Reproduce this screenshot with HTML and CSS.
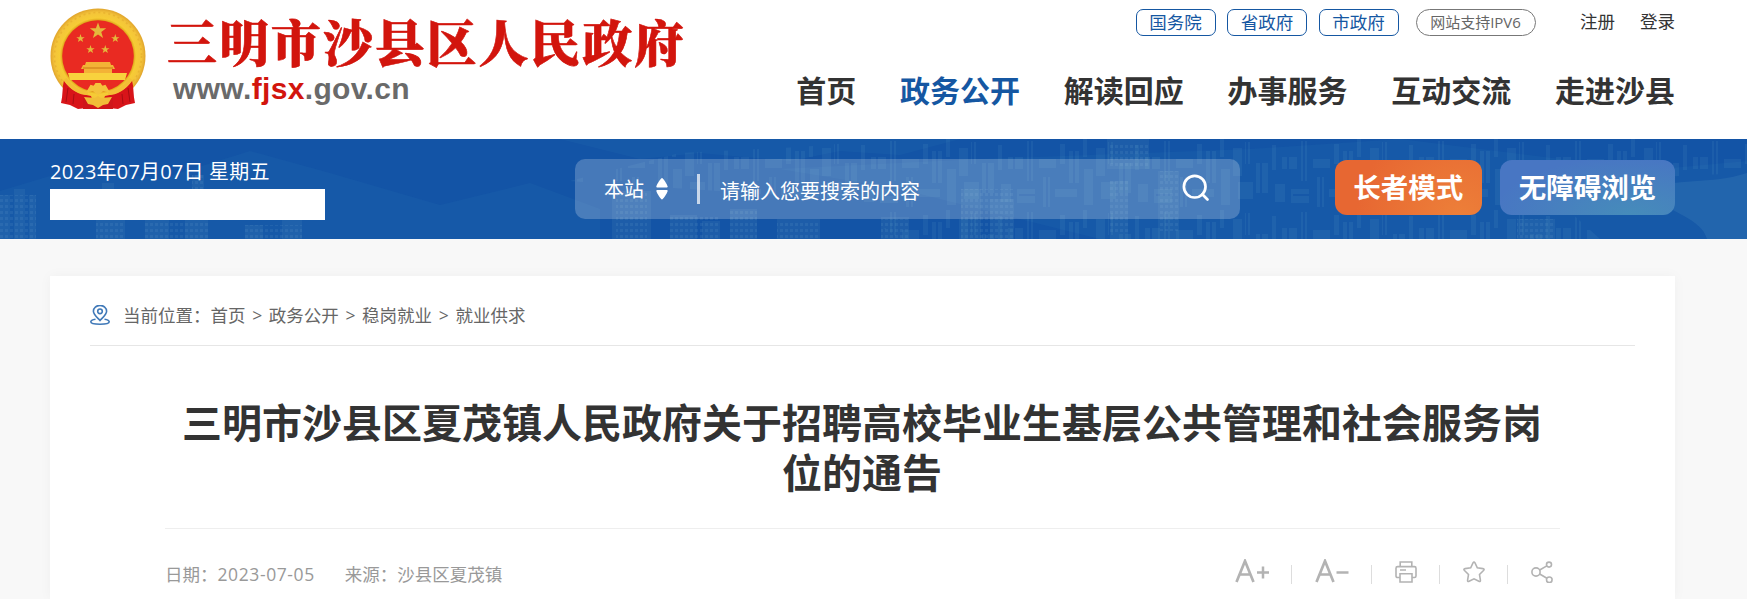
FILE: index.html
```html
<!DOCTYPE html>
<html lang="zh-CN">
	<head>
		<title>三明市沙县区人民政府</title>
		<meta charset="utf-8">
		<meta name="viewport" content="width=device-width, initial-scale=1">
		<link rel="stylesheet" href="styles.css">
	</head>
	<body>
		<header class="header wrap">
			<a class="logo">
				<svg class="emblem" viewBox="0 0 96 102">
					<defs>
						<radialGradient id="gold"><stop offset=".74" stop-color="#d99a13"/><stop offset=".8" stop-color="#f6cc35"/><stop offset=".92" stop-color="#f4c43a"/><stop offset="1" stop-color="#e0a42c"/></radialGradient>
						<path id="star" d="M0-10 2.4-3.1 9.5-3.1 3.8 1.2 5.9 8.1 0 4-5.9 8.1-3.8 1.2-9.5-3.1-2.4-3.1Z"/>
					</defs>
					<circle cx="48" cy="48" r="47.5" fill="url(#gold)"/>
					<circle cx="48" cy="48" r="43.5" fill="none" stroke="#dfa426" stroke-width="1.5" stroke-dasharray="2 3" opacity=".5"/>
					<circle cx="48" cy="48" r="35.8" fill="#e92a22"/>
					<g fill="#e4b83c">
						<use href="#star" transform="translate(48 23) scale(.86)"/>
						<use href="#star" transform="translate(30.5 30.5) scale(.44)"/>
						<use href="#star" transform="translate(65.3 30.5) scale(.44)"/>
						<use href="#star" transform="translate(40.5 41.5) scale(.44)"/>
						<use href="#star" transform="translate(55.3 41.5) scale(.44)"/>
					</g>
					<path d="M36 54h24l1 3h2l2 4h-3v4H34v-4h-3l2-4h2z" fill="#f3b336"/>
					<path d="M33 60h30" stroke="#c97815"/>
					<path d="M18 65h59l-2 7H20z" fill="#f8d23d"/>
					<path d="M14 72c5 9 14 14 27 16l4 11-17 2-8-4-9-2c2-8 1-15 3-23z" fill="#d81419"/>
					<path d="M82 72c-5 9-14 14-27 16l-4 11 17 2 8-4 9-2c-2-8-1-15-3-23z" fill="#d81419"/>
					<path d="M18 80l-2 14M24 86l-1 10M78 80l2 14M72 86l1 10" stroke="#a90d12" fill="none"/>
					<path d="M15 71c8 11 15 14 23 14M81 71c-8 11-15 14-23 14" stroke="#f3be36" stroke-width="4" fill="none"/>
					<path d="M33 90h30v11H33z" fill="#cf1519"/>
					<path d="M38 83l3-5 3 1 2-3h4l2 3 3-1 3 5-5-1-5 4-5-4z" fill="#f4c23d" stroke="#f4c23d" stroke-width="2"/>
					<path d="M34 89l11 1 3-2 3 2 11-1-4 7-5 1-5 3-5-3-5-1z" fill="#f1bd38"/>
				</svg>
				<span class="logo_text">
					<strong class="site_name">三明市沙县区人民政府</strong>
					<span class="site_url">www.<em>fjsx</em>.gov.cn</span>
				</span>
			</a>
			<div class="header_right">
				<div class="top_links">
					<a class="pill">国务院</a>
					<a class="pill">省政府</a>
					<a class="pill">市政府</a>
					<a class="pill_ipv6">网站支持IPV6</a>
					<a class="top_text">注册</a>
					<a class="top_text">登录</a>
				</div>
				<nav class="nav">
					<a>首页</a>
					<a class="on">政务公开</a>
					<a>解读回应</a>
					<a>办事服务</a>
					<a>互动交流</a>
					<a>走进沙县</a>
				</nav>
			</div>
		</header>

		<div class="banner">
			<svg class="skyline" viewBox="0 0 1747 100">
				<defs>
					<pattern id="win" width="5" height="6" patternUnits="userSpaceOnUse"><path d="M0 0h3v3H0z" fill="#74a7cf"/></pattern>
					<pattern id="town" width="137" height="71" patternUnits="userSpaceOnUse">
						<path d="M0 9h9v28H0zM12 3h5v22h-5zM23 24h12v30H23zM39 6h4v25h-4zM49 18h15v12H49zM68 2h6v40h-6zM5 43h15v17H5zM42 45h10v18H42zM80 20h17v9H80zM84 38h7v30h-7zM101 5h5v20h-5zM110 12h10v32h-10zM124 0h4v18h-4zM96 50h22v8H96zM125 30h9v36h-9zM58 50h18v14H58z" fill="#5c9bc4"/>
						<path d="M14 3v22M28 24v30M55 18v12M71 2v40M60 56h16M115 12v32M88 38v30" stroke="#1353a5" stroke-width="2"/>
					</pattern>
				</defs>
				<g fill="#2e7fb8" opacity=".13">
					<path d="M0 52 80 28 160 40 250 12 330 34 440 66 530 44 600 70V100H0z"/>
					<path d="M560 0H960L900 16 840 12 790 22 700 14 640 20z"/>
					<path d="M780 30 980 20 1250 10 1400 0 1560 20 1660 30 1747 22V100H1100L900 50z"/>
				</g>
				<path d="M570 42 680 14 800 8 900 0H1747V34L1610 40 1560 64 1600 100H900L840 60z" fill="url(#town)" opacity=".13"/>
				<g fill="#5693bf" opacity=".15">
					<path d="M0 56h10v44H0zM14 50h11v50H14zM29 56h7v44h-7zM96 60h29v40H96zM102 44h12v16h-12zM145 70h24v30h-24zM185 60h23v40h-23zM192 36h12v24h-12zM245 86h18v14h-18zM282 80h20v20h-20z"/>
					<path d="M612 52h39v48h-39zM670 76h27v24h-27zM702 82h18v18h-18zM730 70h27v30h-27zM777 80h43v20h-43zM881 78h28v22h-28zM961 50h20v50h-20zM990 60h24v40h-24zM1110 42h18v58h-18zM1107 0h42v30h-42zM1158 32h21v68h-21zM1517 80h38v20h-38z"/>
				</g>
				<path d="M0 56h36v44H0zM96 60h29v40H96zM145 70h63v30h-63zM192 36h12v24h-12zM245 86h57v14h-57zM616 54h31v46h-31zM670 76h50v24h-50zM730 70h27v30h-27zM777 82h43v18h-43zM881 80h28v20h-28zM961 50h53v50h-53zM1110 4h39v26h-39zM1110 42h18v52h-18zM1158 32h21v60h-21zM1517 80h38v20h-38z" fill="url(#win)" opacity=".13"/>
				<path d="M1640 52c38-14 70-6 107-18v66h-40c-5-20-35-26-67-48z" fill="#4684ba" opacity=".28"/>
			</svg>
			<div class="banner_in wrap">
				<div class="date">
					<p>2023年07月07日 星期五</p>
					<div class="weather"></div>
				</div>
				<div class="search">
					<span class="search_type">本站</span>
					<svg class="sort" viewBox="0 0 12 22"><path d="M6 0c1 0 5 6 5.700 8.500 0 .8-.5 1-1.200 1h-9C.8 9.500.3 9.300.3 8.500 1 6 5 0 6 0zM6 21.500c1 0 5-6 5.700-8.500 0-.8-.5-1-1.200-1h-9c-.7 0-1.200.2-1.200 1C1 15.500 5 21.500 6 21.500z" fill="#fff"/></svg>
					<i class="search_bar"></i>
					<span class="search_hint">请输入您要搜索的内容</span>
					<svg class="search_btn" viewBox="0 0 28 28"><circle cx="12.700" cy="12.700" r="10.800"/><path d="M20.300 20.300 25.500 25.500"/></svg>
				</div>
				<div class="modes">
					<a class="mode mode_old">长者模式</a>
					<a class="mode mode_free">无障碍浏览</a>
				</div>
			</div>
		</div>

		<main class="card wrap">
			<div class="crumb">
				<svg class="pin" viewBox="0 0 20 20">
					<path d="M10 15.500C6.500 11.800 3.400 9.300 3.400 6.200a6.600 5.800 0 0 1 13.200 0c0 3.100-3.100 5.600-6.600 9.300z"/>
					<circle cx="10" cy="6.300" r="2.300"/>
					<path d="M5.500 14.200C2.500 14.700.8 15.600.8 16.800c0 1.600 3.200 2.400 9.200 2.400s9.200-.8 9.200-2.400c0-1.200-1.700-2.100-4.700-2.600"/>
				</svg>
				<span>当前位置：</span><a>首页</a><i>&gt;</i><a>政务公开</a><i>&gt;</i><a>稳岗就业</a><i>&gt;</i><a>就业供求</a>
			</div>
			<article class="article">
				<h1>三明市沙县区夏茂镇人民政府关于招聘高校毕业生基层公共管理和社会服务岗位的通告</h1>
				<div class="meta">
					<span class="meta_date">日期：<b>2023-07-05</b></span>
					<span>来源：沙县区夏茂镇</span>
					<div class="tools">
						<svg class="tool_font" viewBox="0 0 34 24"><path d="M1.500 23 10 2l8.500 21M4.500 15.500h11" stroke-width="2.700"/><path d="M22 13.500h12M28 7.500v12" stroke-width="2.500"/></svg>
						<i></i>
						<svg class="tool_font" viewBox="0 0 34 24"><path d="M1.500 23 10 2l8.500 21M4.500 15.500h11" stroke-width="2.700"/><path d="M21.500 13.500h12" stroke-width="2.500"/></svg>
						<i></i>
						<svg class="tool" viewBox="0 0 22 22"><path d="M5.200 5.500V1h11.600v4.500M5 16.500H2.600q-1.600 0-1.600-1.600V7.200q0-1.600 1.600-1.600h16.800q1.600 0 1.600 1.600v7.700q0 1.600-1.600 1.600H17M5 12.800h12V21H5zM5 9h6"/></svg>
						<i></i>
						<svg class="tool" viewBox="0 0 22 22"><path d="M10 1.900q1-1.800 2 0l2.300 4.900 5.600.8q2 .4.6 1.900l-4 4 .9 5.700q.2 1.900-1.500 1.100L11 17.800l-4.900 2.500q-1.700.8-1.500-1.100l.9-5.700-4-4Q.1 8 2.100 7.600l5.600-.8z"/></svg>
						<i></i>
						<svg class="tool" viewBox="0 0 22 22"><circle cx="5" cy="11" r="4.100"/><circle cx="18" cy="3.600" r="2.500"/><circle cx="18.300" cy="18.800" r="2.800"/><path d="M8.700 9 15.800 4.900M8.700 13l7.200 4.300"/></svg>
					</div>
				</div>
			</article>
		</main>
	</body>
</html>
```
FILE: styles.css
```css
/*
 * RESET
 */
* { margin: 0; padding: 0; box-sizing: border-box; }
i, em { font-style: normal; }
svg { display: block; flex: none; }

/*
 * LAYOUT
 */
html, body { height: 100%; overflow: hidden; }
body {
	display: flex; flex-direction: column;
	font-family: "Open Sans", "Noto Sans CJK SC", sans-serif;
	font-size: 17.5px;
	color: #333;
	background: #f8f8f8;
}
.wrap { width: 1625px; margin-left: 50px; }

/* header */
body { background: linear-gradient(#fff 139px, #f8f8f8 139px); }
.header { display: flex; justify-content: space-between; height: 139px; flex: none; }
.logo { display: flex; padding-top: 8px; }
.emblem { width: 96px; height: 102px; }
.logo_text { display: flex; flex-direction: column; margin-left: 21px; }
.site_name {
	font: 900 50px/60px "Noto Serif CJK SC", "Noto Sans CJK SC", serif;
	letter-spacing: 1.9px;
	color: #d2150d;
	-webkit-text-stroke: .6px #d2150d;
	margin-top: 2px;
}
.site_url {
	padding-left: 6px;
	font: bold 30px/34px "Liberation Sans", Arial, sans-serif;
	letter-spacing: .35px;
	color: #6a6a6a;
	margin-top: 2px;
}
.site_url em { color: #d2150d; }

.top_links { display: flex; justify-content: flex-end; padding-top: 9px; line-height: 25px; }
.pill {
	width: 80px; height: 27px; margin-right: 11.500px;
	border: 1.5px solid #1557a2; border-radius: 7px;
	text-align: center; color: #1557a2;
}
.pill_ipv6 {
	width: 120px; height: 27px; margin: 0 44.500px 0 5.500px;
	border: 1px solid #777; border-radius: 14px;
	font-size: 15px; text-align: center; color: #666;
}
.top_text + .top_text { margin-left: 25px; }
.nav {
	display: flex; justify-content: flex-end; gap: 43.750px;
	margin-top: 32px;
	font-size: 30px; font-weight: bold; line-height: 46px;
}
.nav .on { color: #1557a2; }

/* banner */
.banner { position: relative; height: 100px; flex: none; background: #1354a6; overflow: hidden; }
.skyline { position: absolute; top: 0; left: 0; width: 1747px; height: 100px; }
.banner_in { position: relative; display: flex; align-items: flex-start; height: 100px; }
.date { width: 525px; padding-top: 18px; font-size: 20px; line-height: 30px; letter-spacing: .2px; color: #fff; }
.weather { width: 275px; height: 31px; margin-top: 2px; background: #fff; }
.search {
	display: flex; align-items: center;
	width: 665px; height: 60px; margin-top: 20px; padding: 0 29px;
	border-radius: 10px;
	background: rgba(255,255,255,.22);
	font-size: 20px; color: #fff;
}
.search_type { margin-bottom: 2px; }
.sort { width: 12px; height: 22px; margin-left: 12px; }
.search_bar { width: 3px; height: 30px; margin: 0 20px 0 29px; background: rgba(255,255,255,.7); }
.search_hint { padding-top: 2px; }
.search_btn { width: 28px; height: 28px; margin: 0 1px 3px auto; fill: none; stroke: #fff; stroke-width: 2.700; stroke-linecap: round; }
.modes { display: flex; gap: 18px; margin: 21px 0 0 auto; }
.mode {
	height: 55px; padding: 0 18.750px;
	border-radius: 12px;
	font-size: 27.5px; font-weight: bold; line-height: 56px; color: #fff;
}
.mode_old { background: radial-gradient(circle at 85% 110%, #ed8039, #e76732 75%); }
.mode_free { background: radial-gradient(ellipse at 75% 100%, #468cba, #4876c3 75%); }

/* content */
.card {
	flex: 1; min-height: 0; margin-top: 37px; padding: 0 40px;
	background: #fff;
	box-shadow: 0 0 12px rgba(0,0,0,.04);
}
.crumb {
	display: flex; align-items: center;
	height: 70px; padding-top: 8px;
	border-bottom: 1px solid #e6e6e6;
	color: #666;
}
.crumb span { margin-left: 13px; }
.crumb i { width: 23.300px; text-align: center; padding-top: 1px; }
.pin { width: 20px; height: 20px; margin-top: 1px; fill: none; stroke: #4079b8; stroke-width: 1.600; }
.article { margin: 0 75px; }
.article h1 {
	height: 183px; padding: 52px 1px 0 0;
	border-bottom: 1px solid #eee;
	font-size: 40px; line-height: 50px; text-align: center;
}
.meta { display: flex; align-items: center; height: 88px; color: #999; }
.meta_date { margin-right: 30px; }
.meta b { font-weight: normal; letter-spacing: .6px; }
.tools { display: flex; align-items: center; margin-left: auto; padding: 0 7.500px 2px 0; fill: none; stroke: #b3b3b3; }
.tools i { width: 1px; height: 19px; margin-top: 5px; background: #ddd; }
.tool_font { width: 34px; height: 24px; margin: 0 22.500px 2px; }
.tool { width: 22px; height: 22px; margin: 0 22.500px; stroke-width: 1.600; }
.tool:last-child { margin-right: 0; }
```
